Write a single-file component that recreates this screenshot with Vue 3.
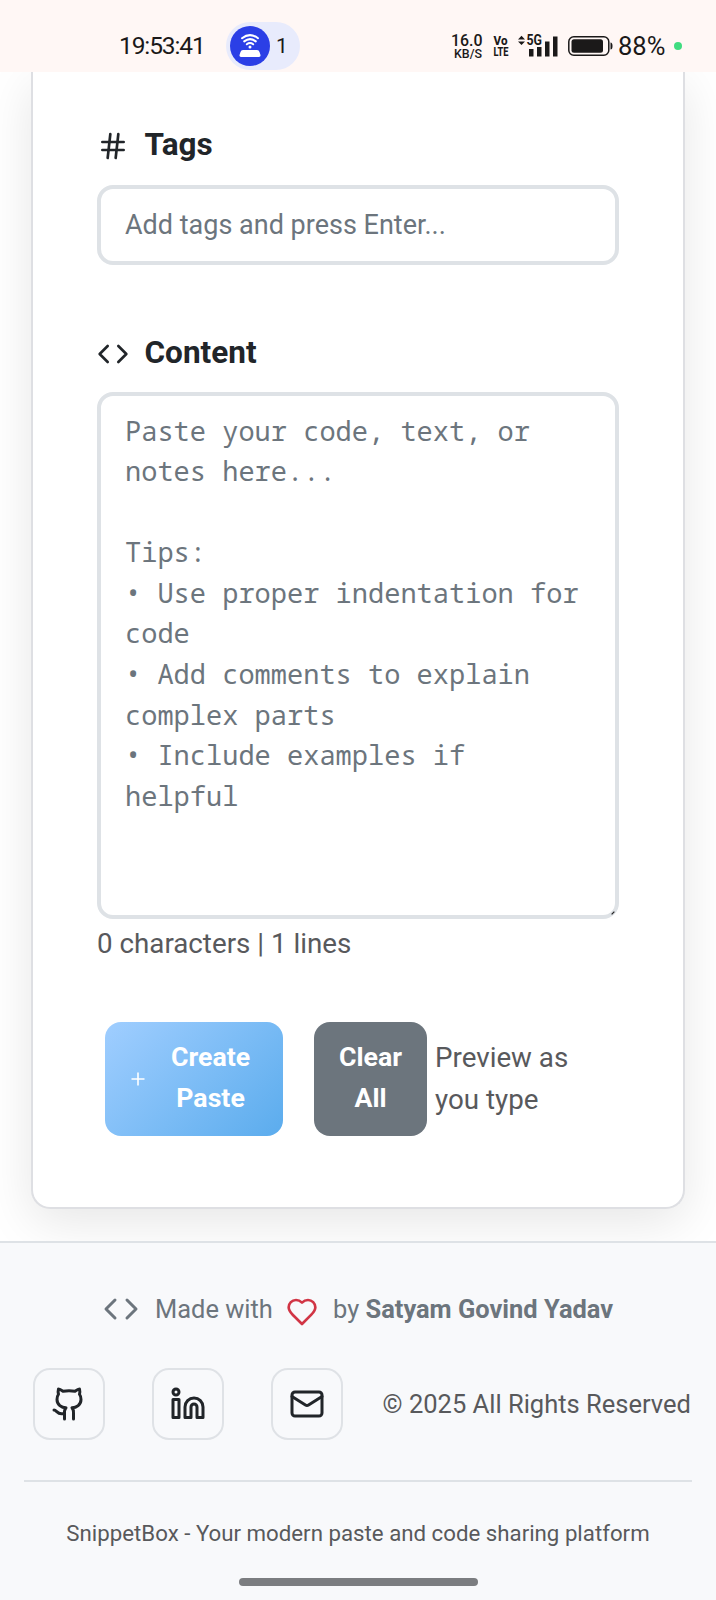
<script setup>
import { ref } from 'vue'

const tag = ref('')
const content = ref('')
const placeholder = [
  'Paste your code, text, or notes here...',
  '',
  'Tips:',
  '• Use proper indentation for code',
  '• Add comments to explain complex parts',
  '• Include examples if helpful',
].join('\n')
</script>

<template>
  <div class="screen">
    <header class="status">
      <span class="clock">19:53:41</span>
      <div class="pill">
        <svg class="hotspot" viewBox="0 0 40 40">
          <circle cx="20" cy="20" r="20" fill="#2b3fe6" />
          <g fill="none" stroke="#fff" stroke-width="2" stroke-linecap="round">
            <path d="M12 12.2Q20 6 28 12.2" />
            <path d="M14.2 15.4Q20 10.8 25.8 15.4" />
            <path d="M16.8 18.3Q20 15.8 23.2 18.3" />
          </g>
          <circle cx="20" cy="21" r="1.5" fill="#fff" />
          <path d="M13 24h14q2 0 2.500 2l1 3q.3 2-1.500 2H11q-1.800 0-1.500-2l1-3q.5-2 2.500-2z" fill="#fff" />
        </svg>
        <span>1</span>
      </div>
      <svg class="speed" viewBox="0 0 32 26">
        <text x="0" y="12.500" font-size="17" textLength="31.500" lengthAdjust="spacingAndGlyphs">16.0</text>
        <text x="3" y="24.500" font-size="13" textLength="28" lengthAdjust="spacingAndGlyphs">KB/S</text>
      </svg>
      <svg class="volte" viewBox="0 0 16 22">
        <text x=".5" y="10.300" font-size="13" textLength="14" lengthAdjust="spacingAndGlyphs">Vo</text>
        <text x=".5" y="21.300" font-size="13.500" textLength="15" lengthAdjust="spacingAndGlyphs">LTE</text>
      </svg>
      <svg class="signal" viewBox="0 0 40 22">
        <path d="M0 4.500L3.500 .8L7 4.500zM0 6.500L3.500 10L7 6.500z" fill="#1b1919" />
        <text x="8.500" y="10.300" textLength="15.500" lengthAdjust="spacingAndGlyphs">5G</text>
        <path d="M11 14h4.500v7.500H11zM19 12h4.500v9.500H19zM27 6.500h4.500v15H27zM35 1.500h4.500v20H35z" fill="#1b1919" />
      </svg>
      <svg class="battery" viewBox="0 0 45 20">
        <rect x=".8" y=".8" width="40" height="18.400" rx="5" fill="none" stroke="#1b1919" stroke-width="1.500" />
        <rect x="3.500" y="3.200" width="31.500" height="13.600" rx="2.500" fill="#1b1919" />
        <path d="M42.500 6.500q2 0 2 3.500t-2 3.500z" fill="#1b1919" />
      </svg>
      <span class="percent">88%</span>
      <i class="dot"></i>
    </header>

    <div class="viewport">
      <main class="card">
        <label class="heading">
          <svg class="icon" viewBox="0 0 24 24"><path d="M4 9h16M4 15h16M10 3L8 21M16 3l-2 18" /></svg>
          <span>Tags</span>
        </label>
        <input v-model="tag" class="field" placeholder="Add tags and press Enter..." />

        <label class="heading second">
          <svg class="icon" viewBox="0 0 24 24"><path d="M16 18l6-6-6-6M8 6l-6 6 6 6" /></svg>
          <span>Content</span>
        </label>
        <div class="editor">
          <textarea v-model="content" class="field area" :placeholder="placeholder"></textarea>
          <svg class="grip" viewBox="0 0 5 5"><path d="M.8 4.200l3.400-3.400" /></svg>
        </div>
        <p class="count">{{ content.length }} characters | {{ content.split('\n').length }} lines</p>

        <div class="actions">
          <button class="create">
            <svg class="plus" viewBox="0 0 14 14"><path d="M7 .5v13M.5 7h13" /></svg>
            <span>Create<br />Paste</span>
          </button>
          <button class="clear">Clear<br />All</button>
          <span class="preview">Preview as<br />you type</span>
        </div>
      </main>
    </div>

    <footer class="footer">
      <div class="made">
        <svg class="icon code" viewBox="0 0 24 24"><path d="M16 18l6-6-6-6M8 6l-6 6 6 6" /></svg>
        <span class="with">Made with</span>
        <svg class="icon heart" viewBox="0 0 24 24"><path d="M19 14c1.490-1.460 3-3.210 3-5.500A5.500 5.500 0 0 0 16.500 3c-1.760 0-3 .5-4.500 2-1.500-1.500-2.740-2-4.500-2A5.500 5.500 0 0 0 2 8.500c0 2.300 1.500 4.050 3 5.500l7 7Z" /></svg>
        <span class="by">by <strong>Satyam Govind Yadav</strong></span>
      </div>
      <div class="links">
        <a class="social"><svg class="icon" viewBox="0 0 24 24"><path d="M15 22v-4a4.800 4.800 0 0 0-1-3.500c3 0 6-2 6-5.500.08-1.250-.27-2.480-1-3.500.28-1.150.28-2.350 0-3.500 0 0-1 0-3 1.500-2.640-.5-5.360-.5-8 0C6 2 5 2 5 2c-.3 1.150-.3 2.350 0 3.500A5.403 5.403 0 0 0 4 9c0 3.500 3 5.500 6 5.500-.39.49-.68 1.050-.85 1.650-.17.6-.22 1.230-.15 1.850v4M9 18c-4.510 2-5-2-7-2" /></svg></a>
        <a class="social"><svg class="icon" viewBox="0 0 24 24"><path d="M16 8a6 6 0 0 1 6 6v7h-4v-7a2 2 0 0 0-4 0v7h-4v-7a6 6 0 0 1 6-6zM2 9h4v12H2z" /><circle cx="4" cy="4" r="2" /></svg></a>
        <a class="social"><svg class="icon" viewBox="0 0 24 24"><rect x="2" y="4" width="20" height="16" rx="2" /><path d="M22 7l-8.970 5.700a1.940 1.940 0 0 1-2.060 0L2 7" /></svg></a>
        <span class="rights">© 2025 All Rights Reserved</span>
      </div>
      <hr />
      <p class="tagline">SnippetBox - Your modern paste and code sharing platform</p>
      <div class="home"></div>
    </footer>
  </div>
</template>

<style>
body { margin: 0; background: #fff; }
</style>

<style scoped>
* { box-sizing: border-box; }
.screen {
  width: 716px; height: 1600px; overflow: hidden; display: flex; flex-direction: column;
  font-family: Roboto, "Liberation Sans", sans-serif; font-size: 26.700px; color: #212529; background: #fff;
}
.status { height: 72px; flex: none; display: flex; align-items: center; padding: 20px 0 0 119px; background: #fff7f5; color: #1b1919; }
.status > * { flex: none; }
.clock { width: 107px; font-size: 24.500px; letter-spacing: -1.100px; line-height: 28px; margin-top: -1px; white-space: nowrap; }
.pill { width: 74px; height: 48px; border-radius: 24px; background: #e8ebfc; display: flex; align-items: center; padding-left: 4px; gap: 6px; font-size: 21px; }
.hotspot { width: 40px; height: 40px; }
.speed { margin-left: 151px; width: 32px; height: 26px; overflow: visible; font-weight: 500; fill: #1b1919; }
.volte { margin-left: 10px; width: 16px; height: 22px; margin-top: -1px; overflow: visible; font-weight: 800; fill: #1b1919; }
.signal { margin-left: 9px; width: 40px; height: 22px; margin-top: -1px; overflow: visible; }
.signal text { font-size: 14px; font-weight: 700; fill: #1b1919; }
.battery { margin-left: 10px; width: 45px; height: 20px; }
.percent { margin-left: 5px; width: 50px; font-size: 25.500px; line-height: 28px; letter-spacing: 0; white-space: nowrap; }
.dot { margin-left: 6px; width: 8px; height: 8px; border-radius: 50%; background: #40dc80; }

.viewport { height: 1169px; flex: none; overflow: hidden; padding: 0 31px; }
.card {
  height: 1137px; width: 654px; padding: 52px 64px 0; border: 2px solid #dedfe3; border-top: 0;
  border-radius: 0 0 19px 19px; box-shadow: 0 13px 50px rgba(0, 0, 0, .1); background: #fff;
}
.icon { fill: none; stroke: currentColor; stroke-width: 2; stroke-linecap: round; stroke-linejoin: round; }
.heading { height: 42px; display: flex; align-items: center; gap: 15.500px; font-size: 31.500px; font-weight: 700; line-height: 36px; }
.heading .icon { width: 32px; height: 32px; margin-top: 2px; }
.second { margin-top: 67px; }
.field {
  display: block; width: 522px; height: 80px; margin-top: 18.500px; padding: 0 24px; border: 4px solid #dee2e6; border-radius: 16px;
  background: #fff; font: 27px Roboto, "Liberation Sans", sans-serif; color: #212529; outline: none;
}
.field::placeholder { color: #6c757d; opacity: 1; }
.editor { position: relative; }
.area { height: 527px; margin-top: 18px; padding: 15px 23px 15px 24px; resize: none; overflow: hidden; font: 27px/40.600px "Droid Sans Mono", "Noto Sans Mono", "DejaVu Sans Mono", monospace; }
.grip { position: absolute; right: 4px; bottom: 4px; width: 4px; height: 4px; stroke: #222; stroke-width: 1.500; }
.count { margin: 4px 0 0; line-height: 42px; font-size: 27.750px; color: #58595c; white-space: nowrap; }
.actions { display: flex; margin: 57.500px 0 0 8px; line-height: 41.500px; }
button { height: 114px; flex: none; border: 0; border-radius: 16px; color: #fff; font: 700 26.700px/41px Roboto, "Liberation Sans", sans-serif; text-align: center; }
.create { width: 178px; display: flex; align-items: center; gap: 26px; padding: 0 0 2px 26px; background: linear-gradient(135deg, #a0ceff, #5baced); }
.plus { width: 14px; height: 14px; flex: none; margin-top: 2px; stroke: #fff; stroke-width: 1.600; }
.clear { width: 113px; margin-left: 31px; padding: 0 0 2px; background: #6c757d; }
.preview { margin-left: 8px; padding-top: 15px; font-size: 27.750px; color: #58595c; white-space: nowrap; }

.footer { height: 359px; flex: none; border-top: 2px solid #dee2e6; background: #f8f9fb; padding: 45px 24px 0; }
.made { height: 42px; display: flex; align-items: center; padding-left: 79px; font-size: 25.450px; color: #6c757d; white-space: nowrap; }
.code { width: 36px; height: 36px; }
.with { width: 117px; margin-left: 16px; }
.heart { width: 32px; height: 32px; margin: 5px 15px 0 14px; color: #d13545; }
.links { height: 72px; margin-top: 38px; padding-left: 9px; display: flex; align-items: center; }
.social { flex: none; width: 72px; height: 72px; margin-right: 47.200px; display: grid; place-items: center; border: 2px solid #dfe2e6; border-radius: 17px; }
.social .icon { width: 36px; height: 36px; }
.rights { margin-left: -8px; color: #58595c; font-size: 25.500px; white-space: nowrap; }
hr { margin: 40px 0 0; border: 0; height: 2px; background: #dee2e6; }
.tagline { margin: 31px 0 0; text-align: center; font-size: 22.250px; line-height: 40px; color: #58595c; white-space: nowrap; }
.home { width: 239px; height: 8px; margin: 25px auto 0; border-radius: 4px; background: #7b7d80; }
</style>
